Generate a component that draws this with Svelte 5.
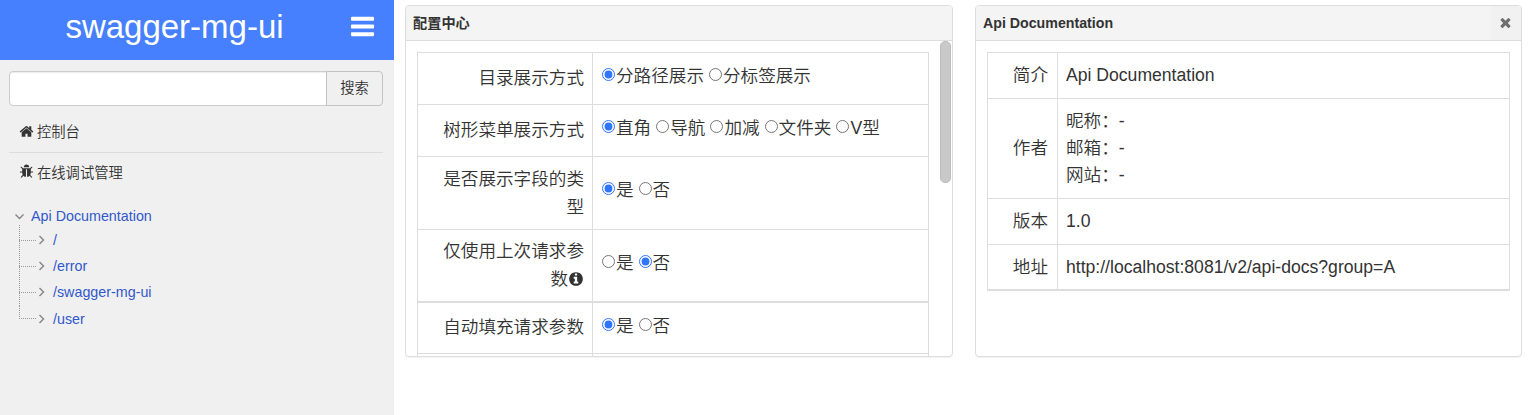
<script lang="ts">
  const settings = [
    { label: ['目录展示方式'], options: ['分路径展示', '分标签展示'], checked: 0, kind: 'single' },
    { label: ['树形菜单展示方式'], options: ['直角', '导航', '加减', '文件夹', 'V型'], checked: 0, kind: 'single' },
    { label: ['是否展示字段的类', '型'], options: ['是', '否'], checked: 0, kind: 'tall' },
    { label: ['仅使用上次请求参', '数'], options: ['是', '否'], checked: 1, kind: 'tall thick', info: true },
    { label: ['自动填充请求参数'], options: ['是', '否'], checked: 0, kind: 'single short' }
  ];
  const info = [
    { label: '简介', lines: ['Api Documentation'] },
    { label: '作者', lines: ['昵称：-', '邮箱：-', '网站：-'] },
    { label: '版本', lines: ['1.0'] },
    { label: '地址', lines: ['http://localhost:8081/v2/api-docs?group=A'] }
  ];
  const paths = ['/', '/error', '/swagger-mg-ui', '/user'];
  const icons = {
    bars: 'M1664 1344v128q0 26-19 45t-45 19h-1408q-26 0-45-19t-19-45v-128q0-26 19-45t45-19h1408q26 0 45 19t19 45zm0-512v128q0 26-19 45t-45 19h-1408q-26 0-45-19t-19-45v-128q0-26 19-45t45-19h1408q26 0 45 19t19 45zm0-512v128q0 26-19 45t-45 19h-1408q-26 0-45-19t-19-45v-128q0-26 19-45t45-19h1408q26 0 45 19t19 45z',
    home: 'M1472 992v480q0 26-19 45t-45 19h-384v-384h-256v384h-384q-26 0-45-19t-19-45v-480q0-1 .5-3t.5-3l575-474 575 474q1 2 1 6zm223-69l-62 74q-8 9-21 11h-3q-13 0-21-7l-692-577-692 577q-12 8-24 7-13-2-21-11l-62-74q-8-10-7-23.5t11-21.5l719-599q32-26 76-26t76 26l244 204v-195q0-14 9-23t23-9h192q14 0 23 9t9 23v408l219 182q10 8 11 21.5t-7 23.5z',
    bug: 'M1696 960q0 26-19 45t-45 19h-224q0 171-67 290l208 209q19 19 19 45t-19 45q-18 19-45 19t-45-19l-198-197q-5 5-15 13t-42 28.5-65 36.5-82 29-97 13v-896h-128v896q-51 0-101.5-13.5t-87-33-66-39-43.5-32.5l-15-14-183 207q-20 21-48 21-24 0-43-16-19-18-20.5-44.5t15.5-46.5l202-227q-58-114-58-274h-224q-26 0-45-19t-19-45 19-45 45-19h224v-294l-173-173q-19-19-19-45t19-45 45-19 45 19l173 173h844l173-173q19-19 45-19t45 19 19 45-19 45l-173 173v294h224q26 0 45 19t19 45zm-480-576h-640q0-133 93.5-226.5t226.5-93.5 226.5 93.5 93.5 226.5z',
    info: 'M1152 1376v-160q0-14-9-23t-23-9h-96v-512q0-14-9-23t-23-9h-320q-14 0-23 9t-9 23v160q0 14 9 23t23 9h96v320h-96q-14 0-23 9t-9 23v160q0 14 9 23t23 9h448q14 0 23-9t9-23zm-128-896v-160q0-14-9-23t-23-9h-192q-14 0-23 9t-9 23v160q0 14 9 23t23 9h192q14 0 23-9t9-23zm640 416q0 209-103 385.5t-279.5 279.5-385.5 103-385.5-103-279.5-279.5-103-385.5 103-385.5 279.5-279.5 385.5-103 385.5 103 279.5 279.5 103 385.5z',
    times: 'M1490 1322q0 40-28 68l-136 136q-28 28-68 28t-68-28l-294-294-294 294q-28 28-68 28t-68-28l-136-136q-28-28-28-68t28-68l294-294-294-294q-28-28-28-68t28-68l136-136q28-28 68-28t68 28l294 294 294-294q28-28 68-28t68 28l136 136q28 28 28 68t-28 68l-294 294 294 294q28 28 28 68z'
  };
</script>

{#snippet icon(d: string, size: number)}
  <svg width={size} height={size} viewBox="0 0 1792 1792" fill="currentColor" aria-hidden="true"><path {d} /></svg>
{/snippet}

<div class="page">
  <aside>
    <header>
      <h1>swagger-mg-ui</h1>
      <span class="toggle">{@render icon(icons.bars, 27)}</span>
    </header>
    <div class="search">
      <input type="text" />
      <button>搜索</button>
    </div>
    <nav>
      <a class="item" href="#console">{@render icon(icons.home, 15)}<span>控制台</span></a>
      <a class="item" href="#debug">{@render icon(icons.bug, 15)}<span>在线调试管理</span></a>
    </nav>
    <div class="tree">
      <div class="root">
        <svg width="8" height="5" viewBox="0 0 8 5"><path d="M.5.5 4.5 4.5 8.5.5" /></svg>
        <span>Api Documentation</span>
      </div>
      <ul>
        {#each paths as path}
          <li>
            <i></i>
            <svg width="5" height="8" viewBox="0 0 5 8"><path d="M.5 0 4.5 4 .5 8" /></svg>
            <span>{path}</span>
          </li>
        {/each}
      </ul>
    </div>
  </aside>

  <main>
    <section class="panel">
      <div class="title"><span class="name cjk">配置中心</span></div>
      <div class="body scroll">
        <div class="table config">
          {#each settings as row, r}
            <div class="row {row.kind}">
              <div class="label">
                {#each row.label as line, i}
                  <div class="line">{line}{#if row.info && i === 1}{@render icon(icons.info, 16)}{/if}</div>
                {/each}
              </div>
              <div class="value">
                {#each row.options as option, i}
                  <label><input type="radio" name="s{r}" checked={i === row.checked} />{option}</label>
                {/each}
              </div>
            </div>
          {/each}
          <div class="row"><div class="label"></div><div class="value"></div></div>
        </div>
        <div class="thumb"></div>
      </div>
    </section>

    <section class="panel">
      <div class="title"><span class="name">Api Documentation</span><span class="close">{@render icon(icons.times, 15)}</span></div>
      <div class="body">
        <div class="table about">
          {#each info as row}
            <div class="row" class:author={row.lines.length > 1}>
              <div class="label">{row.label}</div>
              <div class="value">
                {#each row.lines as line}<div class="line">{line}</div>{/each}
              </div>
            </div>
          {/each}
        </div>
      </div>
    </section>
  </main>
</div>

<style>
  :global(body) {
    background: #fff;
    overflow: hidden;
  }
  .page {
    display: flex;
    height: 415px;
    font-family: "Liberation Sans", Arial, "Noto Sans CJK SC", sans-serif;
    font-size: 14.3px;
    color: #333;
  }
  .page * {
    box-sizing: border-box;
  }
  svg {
    display: block;
    flex: none;
  }
  aside {
    width: 394px;
    flex: none;
    background: #f0f0f0;
  }
  header {
    display: flex;
    height: 60px;
    background: #4680fe;
    color: #fff;
  }
  h1 {
    width: 349px;
    margin: 0;
    text-align: center;
    font-size: 33px;
    font-weight: 400;
    line-height: 54px;
  }
  .toggle {
    padding-top: 13px;
  }
  .search {
    display: flex;
    height: 35px;
    margin: 11px 11px 0 9px;
  }
  .search input {
    flex: 1;
    min-width: 0;
    border: 1px solid #ccc;
    border-radius: 4px 0 0 4px;
    background: #fff;
    box-shadow: inset 0 1px 1px rgba(0, 0, 0, 0.075);
  }
  .search button {
    width: 57px;
    margin-left: -1px;
    padding: 0 0 4px;
    border: 1px solid #c3c3c3;
    border-radius: 0 4px 4px 0;
    background: #f0f0f0;
    color: #333;
    font: 350 14.3px "Liberation Sans", "Noto Sans CJK SC", sans-serif;
  }
  nav {
    margin: 6px 11px 0 9px;
    font-weight: 350;
  }
  .item {
    display: flex;
    align-items: center;
    gap: 3px;
    height: 40px;
    padding: 0 0 2px 10px;
    color: #333;
    text-decoration: none;
  }
  .item:first-child {
    height: 41px;
    border-bottom: 1px solid #ddd;
  }
  .item:last-child {
    padding-bottom: 3px;
  }
  .item span {
    padding-bottom: 1px;
  }
  .tree {
    margin: 14px 0 0 15px;
    color: #3058cc;
  }
  .tree svg {
    fill: none;
    stroke: #858585;
    stroke-width: 1.4;
    overflow: visible;
  }
  .root {
    display: flex;
    align-items: center;
    gap: 8px;
    height: 18px;
  }
  ul {
    list-style: none;
    margin: 0 0 0 4px;
    padding: 2px 0 0;
    background: repeating-linear-gradient(#999 0 1px, transparent 1px 2px) 0 0 / 1px 20px no-repeat;
  }
  li {
    display: flex;
    align-items: center;
    height: 26.2px;
  }
  li i {
    align-self: stretch;
    width: 18px;
    margin-right: 2px;
    background: repeating-linear-gradient(90deg, #999 0 1px, transparent 1px 2px) 0 50% / 100% 1px no-repeat,
      repeating-linear-gradient(#999 0 1px, transparent 1px 2px) 0 0 / 1px 100% no-repeat;
  }
  li:first-child i {
    background-size: 100% 1px, 1px 100%;
  }
  li:last-child i {
    background-size: 100% 1px, 1px 50%;
  }
  li span {
    margin-left: 9px;
  }
  main {
    flex: 1;
    display: grid;
    grid-template-columns: 548px 547px;
    column-gap: 22px;
    padding: 5px 0 0 11px;
    align-items: start;
  }
  .panel {
    height: 352px;
    border: 1px solid #ddd;
    border-radius: 4px;
    overflow: hidden;
    box-shadow: 0 1px 1px rgba(0, 0, 0, 0.05);
  }
  .title {
    display: flex;
    align-items: center;
    justify-content: space-between;
    height: 35px;
    padding-left: 7px;
    border-bottom: 1px solid #ddd;
    background: #f4f4f4;
    font-weight: 700;
  }
  .name {
    font-size: 14.2px;
  }
  .cjk {
    padding-bottom: 3px;
  }
  .close {
    display: flex;
    align-items: center;
    align-self: stretch;
    padding: 0 8px 2px;
    background: #f1f1f1;
    color: #707070;
  }
  .body {
    display: flex;
    height: 315px;
    padding: 11px 11px 0;
    overflow: hidden;
    font-size: 17.6px;
    font-weight: 350;
  }
  .scroll {
    padding-right: 1px;
    justify-content: space-between;
  }
  .thumb {
    width: 11px;
    height: 142px;
    margin-top: -11px;
    border-radius: 5px;
    background: #c9c9c9;
    border: 1px solid #bdbdbd;
  }
  .table {
    border: 1px solid #ddd;
    border-bottom: 0;
    align-self: flex-start;
  }
  .config {
    width: 512px;
  }
  .about {
    width: 523px;
  }
  .row {
    display: flex;
    height: 52px;
    border-bottom: 1px solid #ddd;
  }
  .label {
    display: flex;
    flex-direction: column;
    justify-content: center;
    align-items: flex-end;
    flex: none;
    border-right: 1px solid #ddd;
    padding-right: 8px;
    line-height: 28px;
  }
  .config .label {
    width: 175px;
  }
  .single .label {
    padding-bottom: 2px;
  }
  .about .label {
    width: 70px;
    padding-right: 9px;
    line-height: 27px;
  }
  .label .line {
    display: flex;
    align-items: center;
  }
  .value {
    display: flex;
    align-items: center;
    padding-left: 8px;
    white-space: nowrap;
  }
  .config .value {
    gap: 5px;
    padding: 0 0 5px 9px;
  }
  .value label {
    display: flex;
    align-items: center;
    line-height: 26px;
  }
  .value input {
    width: 13px;
    height: 13px;
    margin: 0 1px 3px 0;
    accent-color: #2f75ff;
  }
  .tall {
    height: 73px;
  }
  .tall .label {
    padding-bottom: 1px;
  }
  .short {
    height: 51px;
  }
  .thick,
  .about .row:last-child {
    border-bottom-width: 2px;
  }
  .config .tall .value {
    padding-bottom: 6px;
  }
  .about .row {
    height: 46px;
  }
  .about .author {
    height: 100px;
  }
  .about .value {
    flex-direction: column;
    align-items: flex-start;
    justify-content: center;
    line-height: 27px;
  }
</style>
